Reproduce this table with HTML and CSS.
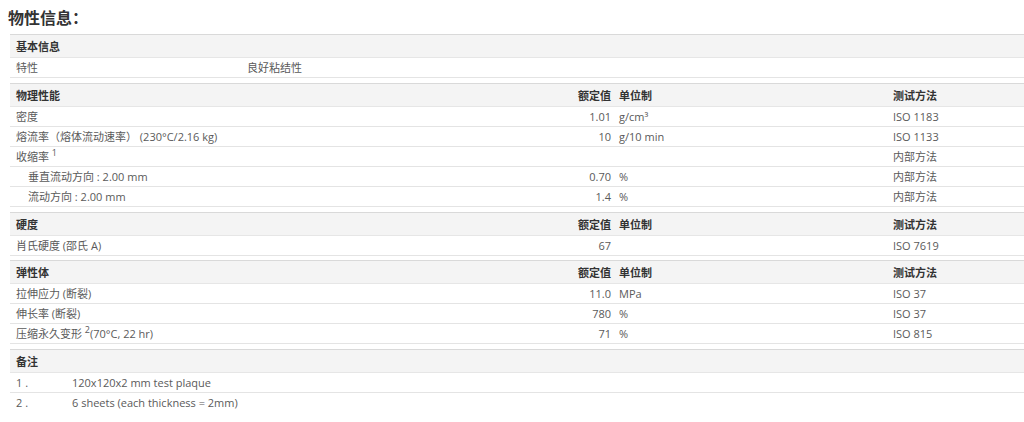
FILE: index.html
```html
<!DOCTYPE html>
<html lang="zh">
<head>
<meta charset="utf-8">
<title>物性信息</title>
<link rel="stylesheet" href="styles.css">
</head>
<body>
<h2 class="title">物性信息：</h2>
<div class="sheet">
  <table class="sec basic">
    <colgroup><col class="c-blbl"><col></colgroup>
    <tr class="hd"><th colspan="2">基本信息</th></tr>
    <tr><td>特性</td><td>良好粘结性</td></tr>
  </table>

  <table class="sec">
    <colgroup><col class="c-lbl"><col class="c-val"><col class="c-unit"><col></colgroup>
    <tr class="hd"><th>物理性能</th><th class="val">额定值</th><th class="unit">单位制</th><th>测试方法</th></tr>
    <tr><td>密度</td><td class="val">1.01</td><td class="unit">g/cm³</td><td>ISO 1183</td></tr>
    <tr><td>熔流率（熔体流动速率） (230°C/2.16 kg)</td><td class="val">10</td><td class="unit">g/10 min</td><td>ISO 1133</td></tr>
    <tr><td>收缩率 <sup>1</sup></td><td class="val"></td><td class="unit"></td><td>内部方法</td></tr>
    <tr><td class="sub">垂直流动方向 : 2.00 mm</td><td class="val">0.70</td><td class="unit">%</td><td>内部方法</td></tr>
    <tr><td class="sub">流动方向 : 2.00 mm</td><td class="val">1.4</td><td class="unit">%</td><td>内部方法</td></tr>
  </table>

  <table class="sec tight">
    <colgroup><col class="c-lbl"><col class="c-val"><col class="c-unit"><col></colgroup>
    <tr class="hd"><th>硬度</th><th class="val">额定值</th><th class="unit">单位制</th><th>测试方法</th></tr>
    <tr><td>肖氏硬度 (邵氏 A)</td><td class="val">67</td><td class="unit"></td><td>ISO 7619</td></tr>
  </table>

  <table class="sec">
    <colgroup><col class="c-lbl"><col class="c-val"><col class="c-unit"><col></colgroup>
    <tr class="hd"><th>弹性体</th><th class="val">额定值</th><th class="unit">单位制</th><th>测试方法</th></tr>
    <tr><td>拉伸应力 (断裂)</td><td class="val">11.0</td><td class="unit">MPa</td><td>ISO 37</td></tr>
    <tr><td>伸长率 (断裂)</td><td class="val">780</td><td class="unit">%</td><td>ISO 37</td></tr>
    <tr><td>压缩永久变形 <sup>2</sup>(70°C, 22 hr)</td><td class="val">71</td><td class="unit">%</td><td>ISO 815</td></tr>
  </table>

  <table class="sec notes">
    <colgroup><col class="c-num"><col></colgroup>
    <tr class="hd"><th colspan="2">备注</th></tr>
    <tr><td>1 .</td><td>120x120x2 mm test plaque</td></tr>
    <tr class="last"><td>2 .</td><td>6 sheets (each thickness = 2mm)</td></tr>
  </table>
</div>
</body>
</html>
```

FILE: styles.css
```css
html, body {
  margin: 0;
  padding: 0;
  background: #fff;
}
body {
  font-family: "Open Sans", "Noto Sans CJK SC", sans-serif;
  font-size: 11px;
  color: #5a5a5a;
}
.title {
  margin: 0;
  padding: 6px 0 0 8px;
  height: 34px;
  box-sizing: border-box;
  font-size: 16px;
  line-height: 22px;
  font-weight: bold;
  color: #333;
  font-family: "Noto Sans CJK SC", sans-serif;
}
.sheet {
  margin-left: 10px;
}
.sec {
  width: 100%;
  border-collapse: collapse;
  table-layout: fixed;
  margin-bottom: 5px;
}
.sec.tight {
  margin-bottom: 4px;
}
.sec th, .sec td {
  padding: 0 6px;
  text-align: left;
  white-space: nowrap;
  overflow: visible;
}
.sec td {
  height: 19px;
  line-height: 19px;
  border-bottom: 1px solid #e4e4e4;
}
.hd th {
  height: 22px;
  line-height: 22px;
  background: #f4f4f4;
  border-top: 1px solid #d9d9d9;
  border-bottom: 1px solid #e6e6e6;
  font-weight: bold;
  color: #333;
  font-family: "Noto Sans CJK SC", sans-serif;
}
.c-blbl { width: 237px; }
.c-lbl { width: 557px; }
.c-val { width: 44px; }
.c-unit { width: 276px; }
.c-num { width: 56px; }
.sec .val {
  text-align: right;
  padding: 0;
}
.sec .unit {
  padding-left: 8px;
}
.basic td:nth-child(2) {
  padding-left: 0;
}
.sec .sub {
  padding-left: 18px;
}
sup {
  font-size: 9px;
  line-height: 0;
}
.notes tr.last td {
  border-bottom: none;
}
```
